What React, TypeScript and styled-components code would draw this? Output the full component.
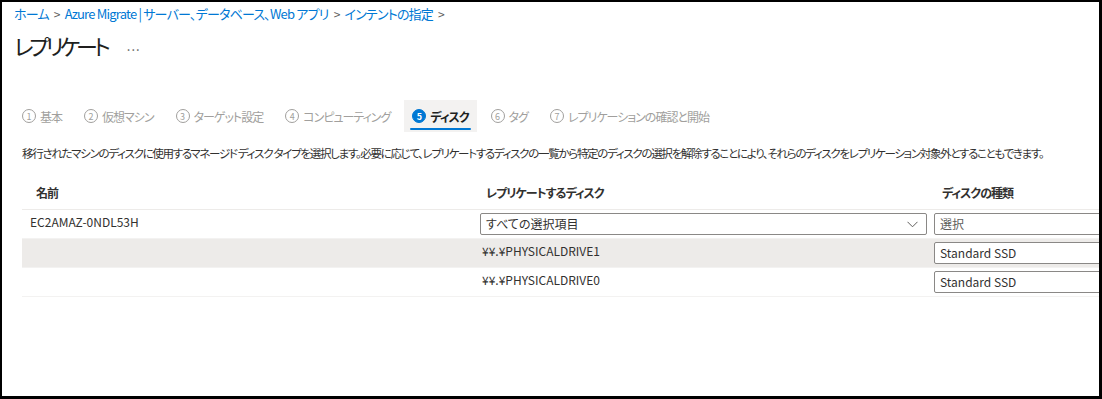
import React from 'react'
import styled, { createGlobalStyle } from 'styled-components'

const GlobalStyle = createGlobalStyle`
  html, body { margin: 0; padding: 0; background: #fff; }
  body {
    font-family: "Noto Sans CJK JP", "Noto Sans", sans-serif;
    font-feature-settings: "palt";
    color: #323130;
  }
`

const Frame = styled.div`
  width: 1102px;
  height: 399px;
  box-sizing: border-box;
  border-style: solid;
  border-color: #000;
  border-width: 2px 3px 3px 2px;
  background: #fff;
  overflow: hidden;
  padding-left: 12px;
  display: flex;
  flex-direction: column;
`

const Breadcrumb = styled.nav`
  margin-top: 2px;
  display: flex;
  align-items: center;
  gap: 5px;
  height: 20px;
  line-height: 20px;
  font-size: 13px;
  letter-spacing: -0.8px;
  white-space: nowrap;
`

const Crumb = styled.a`
  color: #0078d4;
  text-decoration: none;
`

const Sep = styled.span`
  color: #605e5c;
  font-size: 12px;
`

const TitleRow = styled.div`
  margin-top: 6px;
  height: 30px;
  display: flex;
  align-items: center;
  gap: 20px;
`

const Title = styled.h1`
  margin: 0;
  font-size: 22px;
  font-weight: 400;
  letter-spacing: -4px;
  color: #201f1e;
  line-height: 30px;
`

const More = styled.span`
  color: #605e5c;
  font-size: 13px;
  letter-spacing: 1px;
`

const Tabs = styled.div`
  margin-top: 40px;
  display: flex;
  gap: 6px;
  white-space: nowrap;
`

const Tab = styled.div<{ active?: boolean }>`
  position: relative;
  height: 32px;
  padding: 0 8px;
  display: flex;
  align-items: center;
  gap: 4px;
  font-size: 12px;
  letter-spacing: -1px;
  color: ${(p) => (p.active ? '#201f1e' : '#a19f9d')};
  font-weight: ${(p) => (p.active ? 700 : 400)};
  background: ${(p) => (p.active ? '#f3f2f1' : 'transparent')};
  &::after {
    content: '';
    display: ${(p) => (p.active ? 'block' : 'none')};
    position: absolute;
    left: 6px;
    right: 6px;
    bottom: 2px;
    height: 2px;
    border-radius: 1px;
    background: #0078d4;
  }
`

const StepNum = styled.span<{ active?: boolean }>`
  width: 14px;
  height: 14px;
  box-sizing: border-box;
  border-radius: 50%;
  border: 1px solid ${(p) => (p.active ? '#0078d4' : '#a19f9d')};
  background: ${(p) => (p.active ? '#0078d4' : 'transparent')};
  color: ${(p) => (p.active ? '#fff' : '#a19f9d')};
  font-size: 9px;
  letter-spacing: 0;
  font-weight: ${(p) => (p.active ? 700 : 400)};
  display: flex;
  align-items: center;
  justify-content: center;
  line-height: 1;
`

const Description = styled.p`
  margin: 12px 0 0 8px;
  font-size: 11.5px;
  letter-spacing: -1.3px;
  line-height: 18px;
  color: #323130;
  white-space: nowrap;
`

const Table = styled.div`
  margin: 14px 0 0 8px;
  display: grid;
  grid-template-columns: 458px 454px 300px;
  width: 1212px;
`

const HeaderCell = styled.div<{ indent: number }>`
  height: 34px;
  box-sizing: border-box;
  border-bottom: 1px solid #edebe9;
  display: flex;
  align-items: center;
  padding-left: ${(p) => p.indent}px;
  font-size: 12px;
  letter-spacing: -1px;
  font-weight: 700;
  color: #323130;
`

const Cell = styled.div<{ shaded?: boolean; indent?: number }>`
  height: 29px;
  box-sizing: border-box;
  border-bottom: 1px solid #f3f2f1;
  background: ${(p) => (p.shaded ? '#edebe9' : '#fff')};
  padding: 3px 0 0 ${(p) => p.indent ?? 0}px;
  font-size: 12px;
  line-height: 18px;
  color: #323130;
  white-space: nowrap;
`

const Select = styled.div<{ wide?: boolean; placeholder?: boolean }>`
  height: 22px;
  width: ${(p) => (p.wide ? '447px' : '220px')};
  box-sizing: border-box;
  border: 1px solid #8a8886;
  border-radius: 2px;
  background: #fff;
  padding: 0 8px 0 5px;
  display: flex;
  align-items: center;
  justify-content: space-between;
  font-size: 12px;
  line-height: 20px;
  color: ${(p) => (p.placeholder ? '#605e5c' : '#323130')};
`

const Chevron = () => (
  <svg width="11" height="7" viewBox="0 0 11 7">
    <polyline points="0.5,0.8 5.5,5.8 10.5,0.8" fill="none" stroke="#605e5c" strokeWidth="1" />
  </svg>
)

const steps = ['基本', '仮想マシン', 'ターゲット設定', 'コンピューティング', 'ディスク', 'タグ', 'レプリケーションの確認と開始']

const App = () => {
  return (
    <Frame>
      <GlobalStyle />
      <Breadcrumb>
        <Crumb>ホーム</Crumb>
        <Sep>&gt;</Sep>
        <Crumb>Azure Migrate | サーバー、データベース、Web アプリ</Crumb>
        <Sep>&gt;</Sep>
        <Crumb>インテントの指定</Crumb>
        <Sep>&gt;</Sep>
      </Breadcrumb>
      <TitleRow>
        <Title>レプリケート</Title>
        <More>...</More>
      </TitleRow>
      <Tabs>
        {steps.map((s, i) => (
          <Tab key={s} active={i === 4}>
            <StepNum active={i === 4}>{i + 1}</StepNum>
            {s}
          </Tab>
        ))}
      </Tabs>
      <Description>
        移行されたマシンのディスクに使用するマネージド ディスク タイプを選択します。必要に応じて、レプリケートするディスクの一覧から特定のディスクの選択を解除することにより、それらのディスクをレプリケーション対象外とすることもできます。
      </Description>
      <Table>
        <HeaderCell indent={14}>名前</HeaderCell>
        <HeaderCell indent={6}>レプリケートするディスク</HeaderCell>
        <HeaderCell indent={8}>ディスクの種類</HeaderCell>

        <Cell indent={8}>EC2AMAZ-0NDL53H</Cell>
        <Cell>
          <Select wide>
            すべての選択項目
            <Chevron />
          </Select>
        </Cell>
        <Cell>
          <Select placeholder>選択</Select>
        </Cell>

        <Cell shaded />
        <Cell shaded indent={2}>¥¥.¥PHYSICALDRIVE1</Cell>
        <Cell shaded>
          <Select>Standard SSD</Select>
        </Cell>

        <Cell />
        <Cell indent={2}>¥¥.¥PHYSICALDRIVE0</Cell>
        <Cell>
          <Select>Standard SSD</Select>
        </Cell>
      </Table>
    </Frame>
  )
}

export default App
